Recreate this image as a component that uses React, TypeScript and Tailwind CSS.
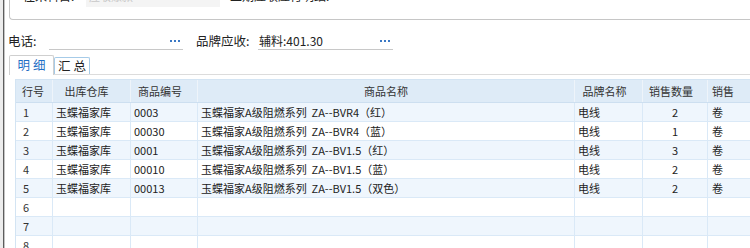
import React from "react";

const rows = [
  { n: "1", wh: "玉蝶福家库", code: "0003", name: "玉蝶福家A级阻燃系列  ZA--BVR4（红）", brand: "电线", qty: "2", unit: "卷" },
  { n: "2", wh: "玉蝶福家库", code: "00030", name: "玉蝶福家A级阻燃系列  ZA--BVR4（蓝）", brand: "电线", qty: "1", unit: "卷" },
  { n: "3", wh: "玉蝶福家库", code: "0001", name: "玉蝶福家A级阻燃系列  ZA--BV1.5（红）", brand: "电线", qty: "3", unit: "卷" },
  { n: "4", wh: "玉蝶福家库", code: "00010", name: "玉蝶福家A级阻燃系列  ZA--BV1.5（蓝）", brand: "电线", qty: "2", unit: "卷" },
  { n: "5", wh: "玉蝶福家库", code: "00013", name: "玉蝶福家A级阻燃系列  ZA--BV1.5（双色）", brand: "电线", qty: "2", unit: "卷" },
  { n: "6", wh: "", code: "", name: "", brand: "", qty: "", unit: "" },
  { n: "7", wh: "", code: "", name: "", brand: "", qty: "", unit: "" },
  { n: "8", wh: "", code: "", name: "", brand: "", qty: "", unit: "" },
];

const Dots = () => (
  <span className="flex gap-[2px] items-center">
    <span className="w-[2px] h-[2px] bg-[#3b78c4]" />
    <span className="w-[2px] h-[2px] bg-[#3b78c4]" />
    <span className="w-[2px] h-[2px] bg-[#3b78c4]" />
  </span>
);

export default function App() {
  const font = { fontFamily: '"Noto Sans CJK SC", "Noto Sans", sans-serif' };
  return (
    <div className="w-[750px] h-[248px] overflow-hidden bg-white flex text-[#222]" style={font}>
      <div className="w-[3px] shrink-0 bg-[#ececec]" />
      <div className="w-px shrink-0 bg-[#5c5c5c]" />
      <div className="w-px shrink-0 bg-[#c4c4c4]" />
      <div className="flex-1 min-w-0">
        {/* group box */}
        <div className="ml-[4px] -mt-[10px] h-[30px] border-l border-b border-[#c6c6c6] rounded-bl-[4px] flex items-start">
          <span className="ml-[13px] text-[12px] leading-[12px] text-[#222] w-[63px]">往来科目:</span>
          <div className="w-[134px] h-[17px] bg-[#f4f4f4] text-[11px] leading-[12px] text-[#c8c8c8] pl-[3px]">应收账款</div>
          <span className="ml-[10px] text-[12px] leading-[12px]">上期应收应付明细:</span>
        </div>
        {/* row 2 */}
        <div className="flex pt-[12px] items-start">
          <span className="ml-[3px] w-[41px] h-[18px] text-[12.5px] leading-[18px]">电话:</span>
          <div className="w-[134px] h-[18px] border-b border-[#c8c8c8] flex items-center justify-end pr-[3px]">
            <Dots />
          </div>
          <span className="ml-[13px] w-[62px] h-[18px] text-[12.5px] leading-[18px]">品牌应收:</span>
          <div className="w-[135px] h-[18px] border-b border-[#c8c8c8] flex items-center justify-between pl-[1px] pr-[3px] text-[12px]">
            <span>辅料:401.30</span>
            <Dots />
          </div>
        </div>
        {/* tabs */}
        <div className="ml-[4px] mt-[5px] h-[20px] border-b border-[#dcdcdc] flex items-end">
          <div className="w-[45px] h-[20px] -mb-px bg-white border border-b-0 border-[#cfcfcf] rounded-t-[2px] text-[12.5px] text-[#1f6fc5] flex items-center justify-center">
            明 细
          </div>
          <div className="w-[36px] h-[17px] border border-b-0 border-[#a6cbe8] rounded-t-[2px] text-[12.5px] text-[#222] flex items-center justify-center">
            汇 总
          </div>
        </div>
        {/* table */}
        <div className="ml-[10px] mt-[4px] border-l border-t border-[#d3e4f3] text-[11px]">
          <div className="grid grid-cols-[37px_78px_67px_377px_68px_65px_60px] h-[23px] bg-[#deebf7] text-[#333] border-b border-[#cddff0]">
            <div className="flex items-center pl-[6px] border-r border-[#eef4fa]">行号</div>
            <div className="flex items-center justify-center pr-[10px] border-r border-[#eef4fa]">出库仓库</div>
            <div className="flex items-center justify-center pr-[8px] border-r border-[#eef4fa]">商品编号</div>
            <div className="flex items-center justify-center border-r border-[#eef4fa]">商品名称</div>
            <div className="flex items-center justify-center pr-[8px] border-r border-[#eef4fa]">品牌名称</div>
            <div className="flex items-center justify-center pr-[8px] border-r border-[#eef4fa]">销售数量</div>
            <div className="flex items-center pl-[4px]">销售</div>
          </div>
          {rows.map((r, i) => (
            <div
              key={r.n}
              className={
                "grid grid-cols-[37px_78px_67px_377px_68px_65px_60px] h-[19px] border-b border-[#dae9f7] " +
                (i % 2 === 0 ? "bg-[#eff6fd]" : "bg-white")
              }
            >
              <div className="flex items-center pl-[7px] border-r border-[#dae9f7] text-[#333]">{r.n}</div>
              <div className="flex items-center pl-[3px] border-r border-[#dae9f7]">{r.wh}</div>
              <div className="flex items-center pl-[3px] border-r border-[#dae9f7]">{r.code}</div>
              <div className="flex items-center pl-[3px] border-r border-[#dae9f7] whitespace-pre">{r.name}</div>
              <div className="flex items-center pl-[3px] border-r border-[#dae9f7]">{r.brand}</div>
              <div className="flex items-center justify-center border-r border-[#dae9f7]">{r.qty}</div>
              <div className="flex items-center pl-[4px]">{r.unit}</div>
            </div>
          ))}
        </div>
      </div>
    </div>
  );
}
